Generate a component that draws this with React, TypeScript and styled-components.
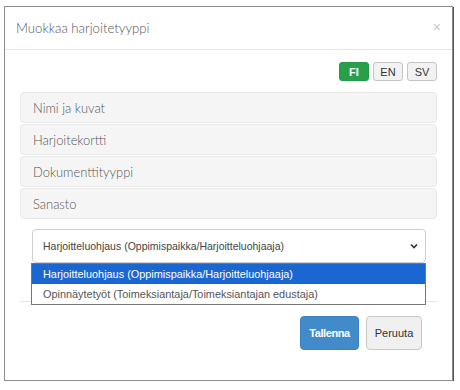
import React from 'react';
import styled, { createGlobalStyle } from 'styled-components';

const GlobalStyle = createGlobalStyle`
  body {
    margin: 0;
    background: #fff;
    font-family: Lato, "Open Sans", "Liberation Sans", sans-serif;
  }
`;

const Modal = styled.div`
  box-sizing: border-box;
  position: relative;
  width: 449px;
  height: 375px;
  margin: 6px 0 0 4px;
  background: #fff;
  border: 1px solid #8c8c8c;
  box-shadow: 1px 1px 0 #555;
  display: flex;
  flex-direction: column;
`;

const Header = styled.div`
  height: 42px;
  display: flex;
  align-items: center;
  justify-content: space-between;
  padding: 0 11px 0 11px;
  border-bottom: 1px solid #e5e5e5;
`;

const Title = styled.h4`
  margin: 0;
  font-size: 13.2px;
  font-weight: 300;
  color: #555;
`;

const Close = styled.span`
  font-family: "Liberation Sans", sans-serif;
  font-size: 14px;
  color: #c8c8c8;
  margin-top: -3px;
`;

const Body = styled.div`
  padding: 12px 15px 0;
`;

const LangRow = styled.div`
  display: flex;
  justify-content: flex-end;
  gap: 4px;
`;

const LangButton = styled.button<{ $active?: boolean }>`
  box-sizing: border-box;
  width: 30px;
  height: 19px;
  padding: 0;
  border-radius: 3px;
  font-family: "Liberation Sans", sans-serif;
  font-size: 11px;
  font-weight: ${(p) => (p.$active ? 700 : 400)};
  color: ${(p) => (p.$active ? '#fff' : '#333')};
  background: ${(p) => (p.$active ? '#28a04a' : '#f2f2f2')};
  border: 1px solid ${(p) => (p.$active ? '#25964a' : '#c4c4c4')};
`;

const Panels = styled.div`
  margin-top: 11px;
  display: flex;
  flex-direction: column;
  gap: 1px;
`;

const Panel = styled.div`
  box-sizing: border-box;
  height: 31px;
  display: flex;
  align-items: center;
  padding: 0 12px;
  background: #f5f5f5;
  border: 1px solid #e9e9e9;
  border-radius: 4px;
  font-size: 12.9px;
  font-weight: 300;
  color: #555;
`;

const SelectWrap = styled.div`
  position: relative;
  margin: 10px 11px 0 12px;
`;

const Select = styled.div`
  box-sizing: border-box;
  height: 34px;
  display: flex;
  align-items: center;
  justify-content: space-between;
  padding: 0 6px 0 10px;
  border: 1px solid #cfcfcf;
  border-radius: 4px;
  font-family: "Liberation Sans", sans-serif;
  font-size: 10.5px;
  color: #444;
`;

const Listbox = styled.div`
  position: absolute;
  top: 34px;
  left: -1px;
  right: 0;
  background: #fff;
  border: 1px solid #767676;
  z-index: 2;
`;

const Option = styled.div<{ $selected?: boolean }>`
  height: 20px;
  display: flex;
  align-items: center;
  padding: 0 11px;
  font-family: "Liberation Sans", sans-serif;
  font-size: 10.9px;
  color: ${(p) => (p.$selected ? '#fff' : '#555')};
  background: ${(p) => (p.$selected ? '#1a67d2' : '#fff')};
`;

const Footer = styled.div`
  margin: 38px 15px 0;
  padding: 14px 15px 0 0;
  border-top: 1px solid #e5e5e5;
  display: flex;
  justify-content: flex-end;
  gap: 7px;
`;

const Button = styled.button<{ $primary?: boolean }>`
  box-sizing: border-box;
  width: ${(p) => (p.$primary ? 59 : 56)}px;
  height: 34px;
  padding: 0;
  border-radius: 4px;
  font-family: "Liberation Sans", sans-serif;
  font-size: 11px;
  font-weight: ${(p) => (p.$primary ? 700 : 400)};
  letter-spacing: ${(p) => (p.$primary ? '-0.4px' : '0')};
  color: ${(p) => (p.$primary ? '#fff' : '#333')};
  background: ${(p) => (p.$primary ? '#428bca' : '#f0f0f0')};
  border: 1px solid ${(p) => (p.$primary ? '#3b82c0' : '#c9c9c9')};
`;

const Chevron = () => (
  <svg width="10" height="10" viewBox="0 0 10 10">
    <path d="M2 3.5 L5 6.5 L8 3.5" fill="none" stroke="#333" strokeWidth="1.6" />
  </svg>
);

const App = () => {
  return (
    <>
      <GlobalStyle />
      <Modal>
        <Header>
          <Title>Muokkaa harjoitetyyppi</Title>
          <Close>×</Close>
        </Header>
        <Body>
          <LangRow>
            <LangButton $active>FI</LangButton>
            <LangButton>EN</LangButton>
            <LangButton>SV</LangButton>
          </LangRow>
          <Panels>
            <Panel>Nimi ja kuvat</Panel>
            <Panel>Harjoitekortti</Panel>
            <Panel>Dokumenttityyppi</Panel>
            <Panel>Sanasto</Panel>
          </Panels>
          <SelectWrap>
            <Select>
              <span>Harjoitteluohjaus (Oppimispaikka/Harjoitteluohjaaja)</span>
              <Chevron />
            </Select>
            <Listbox>
              <Option $selected>Harjoitteluohjaus (Oppimispaikka/Harjoitteluohjaaja)</Option>
              <Option>Opinnäytetyöt (Toimeksiantaja/Toimeksiantajan edustaja)</Option>
            </Listbox>
          </SelectWrap>
        </Body>
        <Footer>
          <Button $primary>Tallenna</Button>
          <Button>Peruuta</Button>
        </Footer>
      </Modal>
    </>
  );
};

export default App;
